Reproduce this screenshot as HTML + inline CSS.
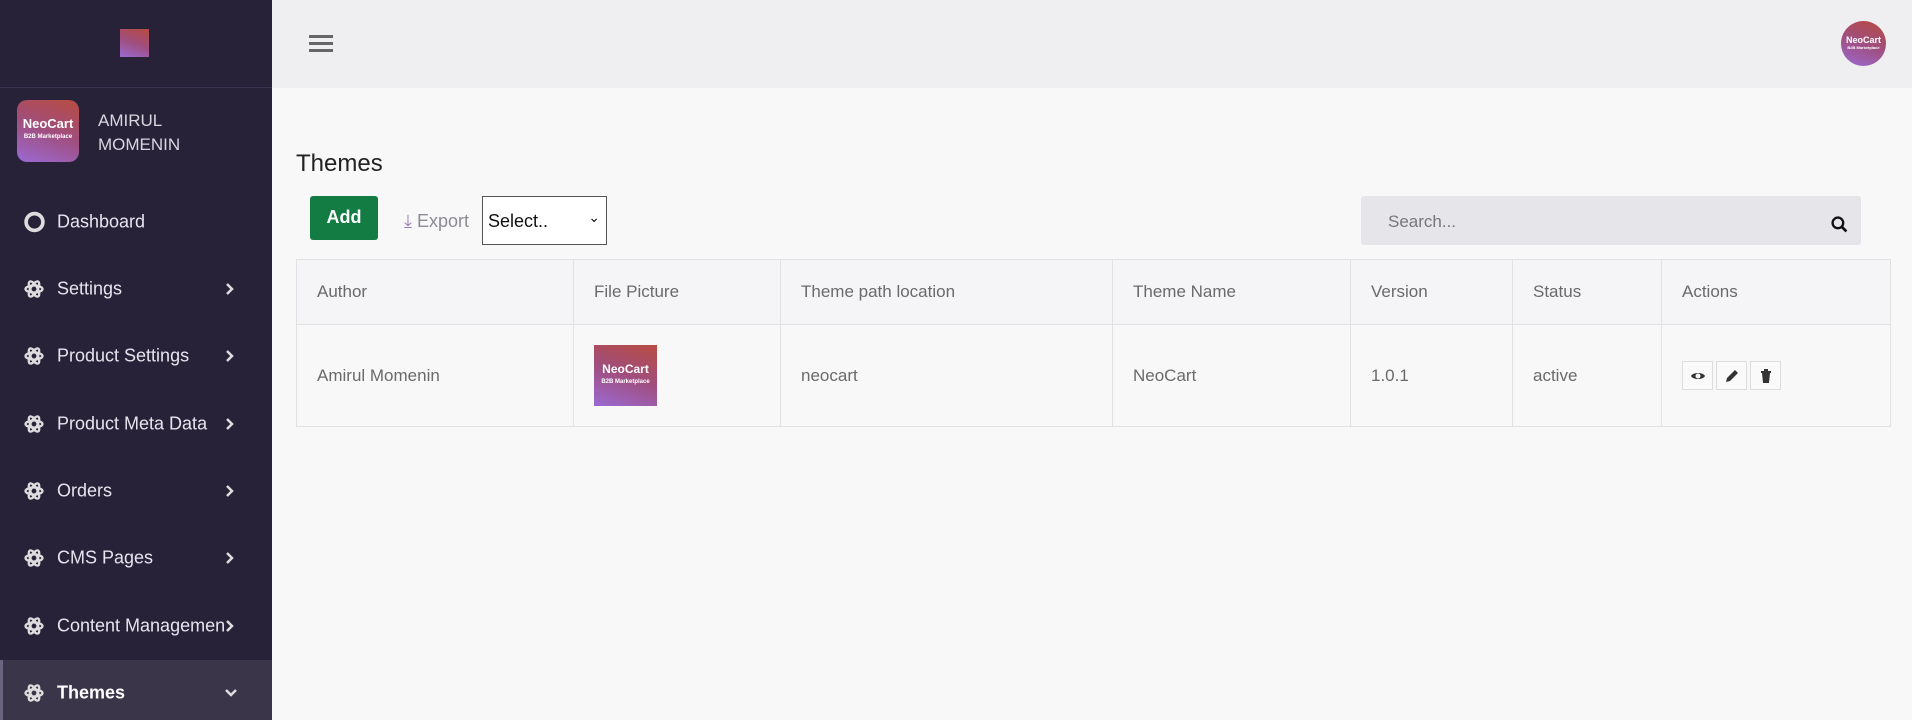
<!DOCTYPE html>
<html><head><meta charset="utf-8"><style>
*{box-sizing:border-box;margin:0;padding:0}
body{width:1912px;height:709px;overflow:hidden;background:#f8f8f8;font-family:"Liberation Sans",sans-serif;position:relative}
.sb{position:absolute;left:0;top:0;width:272px;height:709px;background:#282239}
.sb .div{position:absolute;left:0;top:87px;width:272px;height:1px;background:#3a3450}
.logo{background:linear-gradient(200deg,#b84b40,#a04e7e 50%,#9b6ad4)}
.small{position:absolute;left:120px;top:29px;width:29px;height:28px}
.prof{position:absolute;left:17px;top:100px;width:62px;height:62px;border-radius:10px;color:#fff;text-align:center;font-weight:bold}
.prof b{display:block;font-size:13px;margin-top:16px}
.prof i{display:block;font-style:normal;font-size:6px;margin-top:3px}
.name{position:absolute;left:98px;top:109px;color:#d8d6e0;font-size:17px;line-height:24px}
.mi{position:absolute;left:0;width:272px;height:67px;color:#e6e4ee;font-size:18px}
.mi span.t{position:absolute;left:57px;top:50%;transform:translateY(-50%)}
.mi svg.ic{position:absolute;left:24px;top:50%;transform:translateY(-50%)}
.mi svg.ch{position:absolute;left:224px;top:50%;transform:translateY(-50%)}
.act{background:#3a3549;border-left:3px solid #6a6480}
.top{position:absolute;left:272px;top:0;width:1640px;height:88px;background:#efeff1}
.ham{position:absolute;left:309px;top:35px;width:24px}
.ham i{display:block;height:3px;background:#666;margin-bottom:4px}
.av{position:absolute;left:1841px;top:21px;width:45px;height:45px;border-radius:50%;color:#fff;text-align:center;font-weight:bold;font-size:9px}
h1{position:absolute;left:296px;top:150px;font-size:24px;font-weight:normal;color:#222}
.add{position:absolute;left:310px;top:196px;width:68px;height:44px;background:#137c43;color:#fff;font-weight:bold;font-size:18px;border-radius:3px;text-align:center;line-height:43px}
.exp{position:absolute;left:404px;top:211px;color:#8d8a93;font-size:18px}
.sel{position:absolute;left:482px;top:196px;width:125px;height:49px;background:#fff;border:1px solid #555;font-size:18px;color:#111;padding:14px 5px}
.srch{position:absolute;left:1361px;top:196px;width:500px;height:49px;background:#e6e5ea;border-radius:3px}
.srch span{position:absolute;left:27px;top:16px;color:#777;font-size:17px}
table{position:absolute;left:296px;top:259px;width:1595px;border-collapse:collapse;font-size:17px;color:#6a6a6a}
td{border:1px solid #e2e2e4;padding:0 0 0 20px;vertical-align:middle}
tr.h td{height:65px;background:#f5f5f7}
tr.r td{height:102px}
.pic{width:63px;height:61px;color:#fff;text-align:center;font-weight:bold}
.btn{display:inline-block;width:31px;height:29px;border:1px solid #ddd;background:#fafafa;margin-right:3px;vertical-align:middle;position:relative}
.btn svg{position:absolute;left:7px;top:6px}
</style></head><body>
<svg width="0" height="0" style="position:absolute"><defs>
<g id="atom" fill="none" stroke="#ddd" stroke-width="2.3"><ellipse cx="10" cy="10" rx="8.5" ry="3.5"/><ellipse cx="10" cy="10" rx="8.5" ry="3.5" transform="rotate(60 10 10)"/><ellipse cx="10" cy="10" rx="8.5" ry="3.5" transform="rotate(-60 10 10)"/></g>
<path id="chev" d="M3 2l5 5-5 5" fill="none" stroke="#ddd" stroke-width="2.5"/>
</defs></svg>
<div class="sb">
<div class="small logo"></div>
<div class="div"></div>
<div class="prof logo"><b>NeoCart</b><i>B2B Marketplace</i></div>
<div class="name">AMIRUL<br>MOMENIN</div>
<div class="mi" style="top:188px"><svg class="ic" width="21" height="21" viewBox="0 0 20 20"><circle cx="10" cy="10" r="8" fill="none" stroke="#ddd" stroke-width="3.5"/></svg><span class="t">Dashboard</span></div>
<div class="mi" style="top:255px"><svg class="ic" width="20" height="20" viewBox="0 0 20 20"><use href="#atom"/></svg><span class="t">Settings</span><svg class="ch" width="12" height="14" viewBox="0 0 12 14"><use href="#chev"/></svg></div>
<div class="mi" style="top:322px"><svg class="ic" width="20" height="20" viewBox="0 0 20 20"><use href="#atom"/></svg><span class="t">Product Settings</span><svg class="ch" width="12" height="14" viewBox="0 0 12 14"><use href="#chev"/></svg></div>
<div class="mi" style="top:390px"><svg class="ic" width="20" height="20" viewBox="0 0 20 20"><use href="#atom"/></svg><span class="t">Product Meta Data</span><svg class="ch" width="12" height="14" viewBox="0 0 12 14"><use href="#chev"/></svg></div>
<div class="mi" style="top:457px"><svg class="ic" width="20" height="20" viewBox="0 0 20 20"><use href="#atom"/></svg><span class="t">Orders</span><svg class="ch" width="12" height="14" viewBox="0 0 12 14"><use href="#chev"/></svg></div>
<div class="mi" style="top:524px"><svg class="ic" width="20" height="20" viewBox="0 0 20 20"><use href="#atom"/></svg><span class="t">CMS Pages</span><svg class="ch" width="12" height="14" viewBox="0 0 12 14"><use href="#chev"/></svg></div>
<div class="mi" style="top:592px"><svg class="ic" width="20" height="20" viewBox="0 0 20 20"><use href="#atom"/></svg><span class="t">Content Managemen</span><svg class="ch" width="12" height="14" viewBox="0 0 12 14"><use href="#chev"/></svg></div>
<div class="mi act" style="top:660px;height:60px"><svg class="ic" width="20" height="20" viewBox="0 0 20 20" style="left:21px;top:33px"><use href="#atom"/></svg><span class="t" style="top:33px;left:54px;font-weight:bold;color:#fff">Themes</span><svg class="ch" width="14" height="12" viewBox="0 0 14 12" style="left:221px;top:33px"><path d="M2 3l5 5 5-5" fill="none" stroke="#ddd" stroke-width="2.5"/></svg></div>
</div>
<div class="top"></div>
<div class="ham"><i></i><i></i><i></i></div>
<div class="av logo"><div style="margin-top:14px">NeoCart</div><div style="font-size:4px">B2B Marketplace</div></div>
<h1>Themes</h1>
<div class="add">Add</div>
<div class="exp"><span style="color:#9a7db0">⤓</span> Export</div>
<div class="sel">Select.. <span style="position:absolute;right:6px;top:12px;font-size:14px">⌄</span></div>
<div class="srch"><span>Search...</span><svg style="position:absolute;left:470px;top:20px" width="17" height="17" viewBox="0 0 16 16"><circle cx="6.5" cy="6.5" r="5" fill="none" stroke="#111" stroke-width="2.2"/><path d="M10 10l4.5 4.5" stroke="#111" stroke-width="2.5"/></svg></div>
<table>
<tr class="h"><td style="width:277px">Author</td><td style="width:207px">File Picture</td><td style="width:332px">Theme path location</td><td style="width:238px">Theme Name</td><td style="width:162px">Version</td><td style="width:149px">Status</td><td>Actions</td></tr>
<tr class="r"><td>Amirul Momenin</td><td><div class="pic logo"><div style="font-size:12px;padding-top:17px">NeoCart</div><div style="font-size:6px;margin-top:3px">B2B Marketplace</div></div></td><td>neocart</td><td>NeoCart</td><td>1.0.1</td><td>active</td><td>
<span class="btn"><svg width="16" height="16" viewBox="0 0 16 16"><path d="M1 8c2-4 12-4 14 0c-2 4-12 4-14 0z" fill="#333"/><circle cx="8" cy="8" r="2.5" fill="#fafafa"/></svg></span><span class="btn"><svg width="16" height="16" viewBox="0 0 16 16"><path d="M2 14l1-4 8-8 3 3-8 8z" fill="#333"/></svg></span><span class="btn"><svg width="16" height="16" viewBox="0 0 16 16"><path d="M3 3h10v2H3zM6 1h4v2H6zM4 5h8l-1 10H5z" fill="#333"/></svg></span>
</td></tr>
</table>
</body></html>
